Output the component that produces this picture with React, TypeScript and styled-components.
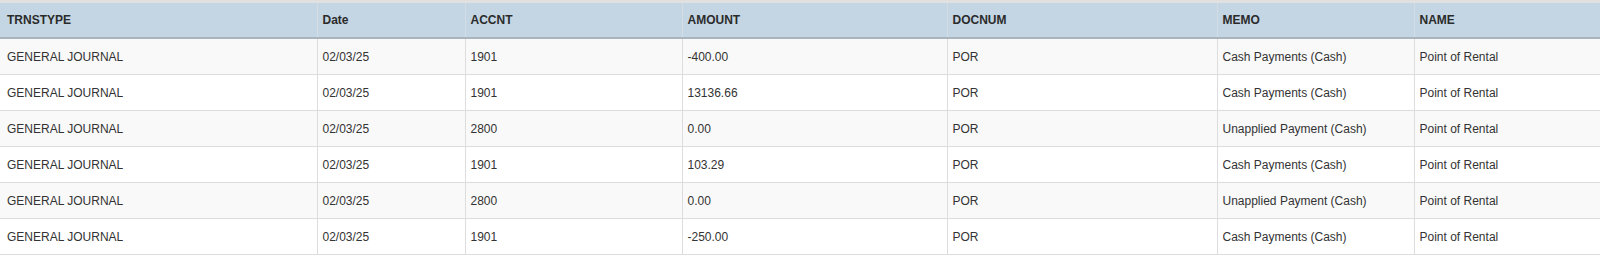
import React from "react";
import styled, { createGlobalStyle } from "styled-components";

const GlobalStyle = createGlobalStyle`
  html, body {
    margin: 0;
    padding: 0;
    background: #fff;
  }
  body {
    font-family: "Liberation Sans", Arial, sans-serif;
    overflow: hidden;
  }
`;

type Row = {
  trnstype: string;
  date: string;
  accnt: string;
  amount: string;
  docnum: string;
  memo: string;
  name: string;
};

const columns: { key: keyof Row; label: string; width: number }[] = [
  { key: "trnstype", label: "TRNSTYPE", width: 317 },
  { key: "date", label: "Date", width: 148 },
  { key: "accnt", label: "ACCNT", width: 217 },
  { key: "amount", label: "AMOUNT", width: 265 },
  { key: "docnum", label: "DOCNUM", width: 270 },
  { key: "memo", label: "MEMO", width: 197 },
  { key: "name", label: "NAME", width: 186 },
];

const rows: Row[] = [
  { trnstype: "GENERAL JOURNAL", date: "02/03/25", accnt: "1901", amount: "-400.00", docnum: "POR", memo: "Cash Payments (Cash)", name: "Point of Rental" },
  { trnstype: "GENERAL JOURNAL", date: "02/03/25", accnt: "1901", amount: "13136.66", docnum: "POR", memo: "Cash Payments (Cash)", name: "Point of Rental" },
  { trnstype: "GENERAL JOURNAL", date: "02/03/25", accnt: "2800", amount: "0.00", docnum: "POR", memo: "Unapplied Payment (Cash)", name: "Point of Rental" },
  { trnstype: "GENERAL JOURNAL", date: "02/03/25", accnt: "1901", amount: "103.29", docnum: "POR", memo: "Cash Payments (Cash)", name: "Point of Rental" },
  { trnstype: "GENERAL JOURNAL", date: "02/03/25", accnt: "2800", amount: "0.00", docnum: "POR", memo: "Unapplied Payment (Cash)", name: "Point of Rental" },
  { trnstype: "GENERAL JOURNAL", date: "02/03/25", accnt: "1901", amount: "-250.00", docnum: "POR", memo: "Cash Payments (Cash)", name: "Point of Rental" },
];

const Wrapper = styled.div`
  width: 1600px;
  border-top: 3px solid #e0e0e0;
`;

const Table = styled.table`
  width: 1600px;
  table-layout: fixed;
  border-collapse: collapse;
  font-size: 12px;
  color: #333;
`;

const HeadCell = styled.th`
  height: 34px;
  padding: 0 5px;
  text-align: left;
  font-weight: bold;
  color: #2b2b2b;
  background: #c4d6e4;
  border-right: 1px solid #d4dde4;
  border-bottom: 2px solid #aab4bc;
  white-space: nowrap;
  overflow: hidden;

  &:first-child {
    padding-left: 7px;
  }
`;

const BodyRow = styled.tr<{ $striped: boolean }>`
  background: ${(p) => (p.$striped ? "#f9f9f9" : "#ffffff")};
`;

const Cell = styled.td`
  height: 35px;
  padding: 0 5px;
  border-right: 1px solid #dddddd;
  border-bottom: 1px solid #dddddd;
  white-space: nowrap;
  overflow: hidden;

  &:first-child {
    padding-left: 7px;
  }
`;

export default function App() {
  return (
    <>
      <GlobalStyle />
      <Wrapper>
        <Table>
          <colgroup>
            {columns.map((c) => (
              <col key={c.key} style={{ width: c.width }} />
            ))}
          </colgroup>
          <thead>
            <tr>
              {columns.map((c) => (
                <HeadCell key={c.key}>{c.label}</HeadCell>
              ))}
            </tr>
          </thead>
          <tbody>
            {rows.map((r, i) => (
              <BodyRow key={i} $striped={i % 2 === 0}>
                {columns.map((c) => (
                  <Cell key={c.key}>{r[c.key]}</Cell>
                ))}
              </BodyRow>
            ))}
          </tbody>
        </Table>
      </Wrapper>
    </>
  );
}
